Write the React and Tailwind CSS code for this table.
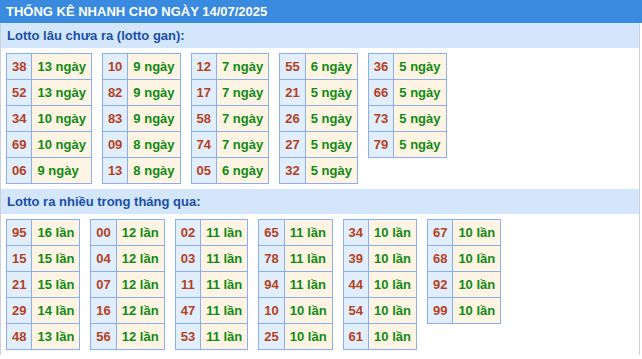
const ganTables = [
  [["38", "13 ngày"], ["52", "13 ngày"], ["34", "10 ngày"], ["69", "10 ngày"], ["06", "9 ngày"]],
  [["10", "9 ngày"], ["82", "9 ngày"], ["83", "9 ngày"], ["09", "8 ngày"], ["13", "8 ngày"]],
  [["12", "7 ngày"], ["17", "7 ngày"], ["58", "7 ngày"], ["74", "7 ngày"], ["05", "6 ngày"]],
  [["55", "6 ngày"], ["21", "5 ngày"], ["26", "5 ngày"], ["27", "5 ngày"], ["32", "5 ngày"]],
  [["36", "5 ngày"], ["66", "5 ngày"], ["73", "5 ngày"], ["79", "5 ngày"]],
];

const hotTables = [
  [["95", "16 lần"], ["15", "15 lần"], ["21", "15 lần"], ["29", "14 lần"], ["48", "13 lần"]],
  [["00", "12 lần"], ["04", "12 lần"], ["07", "12 lần"], ["16", "12 lần"], ["56", "12 lần"]],
  [["02", "11 lần"], ["03", "11 lần"], ["11", "11 lần"], ["47", "11 lần"], ["53", "11 lần"]],
  [["65", "11 lần"], ["78", "11 lần"], ["94", "11 lần"], ["10", "10 lần"], ["25", "10 lần"]],
  [["34", "10 lần"], ["39", "10 lần"], ["44", "10 lần"], ["54", "10 lần"], ["61", "10 lần"]],
  [["67", "10 lần"], ["68", "10 lần"], ["92", "10 lần"], ["99", "10 lần"]],
];

function StatTable({ rows }) {
  return (
    <table className="border-collapse border border-[#8aaef0]">
      <tbody>
        {rows.map(([num, label]) => (
          <tr key={num} className="h-[26px]">
            <td className="border border-[#8aaef0] bg-[#e1eefd] px-[5px] text-center text-[#b5401c]">{num}</td>
            <td className="border border-[#8aaef0] bg-[#fdf4e3] px-[5px] text-left text-[#108a14]">{label}</td>
          </tr>
        ))}
      </tbody>
    </table>
  );
}

function Section({ title, tables }) {
  return (
    <>
      <div className="flex h-[25px] items-center bg-[#d3e6fb] px-[6px] text-[13px] font-bold text-[#1b4ea6]">{title}</div>
      <div className="flex flex-wrap items-start gap-x-[10px] px-[5px] py-[5px]">
        {tables.map((rows, i) => (
          <StatTable key={i} rows={rows} />
        ))}
      </div>
    </>
  );
}

export default function App() {
  return (
    <div className="w-[642px] bg-white text-[13px] font-bold leading-[15px]" style={{ fontFamily: '"Liberation Sans", Arial, sans-serif' }}>
      <div className="flex h-[23px] items-center bg-[#3a8be0] px-[6px] text-[13px] font-bold text-white">
        THỐNG KÊ NHANH CHO NGÀY 14/07/2025
      </div>
      <div className="w-[640px] border-x border-[#c9d0da]">
        <Section title="Lotto lâu chưa ra (lotto gan):" tables={ganTables} />
        <Section title="Lotto ra nhiều trong tháng qua:" tables={hotTables} />
      </div>
    </div>
  );
}
